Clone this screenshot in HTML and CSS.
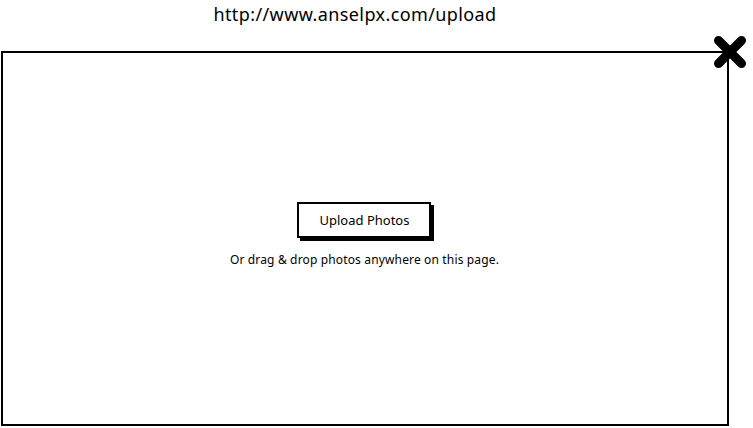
FILE: index.html
```html
<!DOCTYPE html>
<html>
<head>
<meta charset="utf-8">
<link rel="stylesheet" href="styles.css">
</head>
<body>
<div class="page">
  <div class="url">http://www.anselpx.com/upload</div>
  <div class="dialog">
    <div class="content">
      <button class="upload-btn">Upload Photos</button>
      <p class="hint">Or drag &amp; drop photos anywhere on this page.</p>
    </div>
    <svg class="close" width="36" height="36" viewBox="0 0 36 36">
      <path d="M6.5 6.5 L29.5 29.5 M29.5 6.5 L6.5 29.5" stroke="#000" stroke-width="9" stroke-linecap="round" fill="none"/>
    </svg>
  </div>
</div>
</body>
</html>
```
FILE: styles.css
```css
* { box-sizing: border-box; }
html, body { margin: 0; padding: 0; background: #fff; }
body {
  font-family: "Noto Sans", "DejaVu Sans", sans-serif;
  color: #000;
  width: 753px;
  height: 428px;
  overflow: hidden;
}
.page {
  display: flex;
  flex-direction: column;
  height: 428px;
}
.url {
  height: 51px;
  padding-top: 2px;
  padding-right: 43px;
  text-align: center;
  font-size: 18px;
  line-height: 24px;
  letter-spacing: 0.4px;
}
.dialog {
  position: relative;
  margin-left: 1px;
  width: 728px;
  height: 375px;
  border: 2px solid #000;
  display: flex;
  align-items: center;
  justify-content: center;
}
.content {
  display: flex;
  flex-direction: column;
  align-items: center;
  margin-left: -1px;
  margin-top: -7px;
}
.upload-btn {
  width: 134px;
  height: 36px;
  background: #fff;
  border: 2px solid #000;
  box-shadow: 3px 3px 0 #000;
  font-family: inherit;
  font-size: 13px;
  color: #000;
  padding: 0;
  cursor: pointer;
}
.hint {
  margin: 14px 0 0 0;
  font-size: 12px;
  line-height: 16px;
  letter-spacing: 0.15px;
}
.close {
  position: absolute;
  top: -19px;
  right: -21px;
}
```
